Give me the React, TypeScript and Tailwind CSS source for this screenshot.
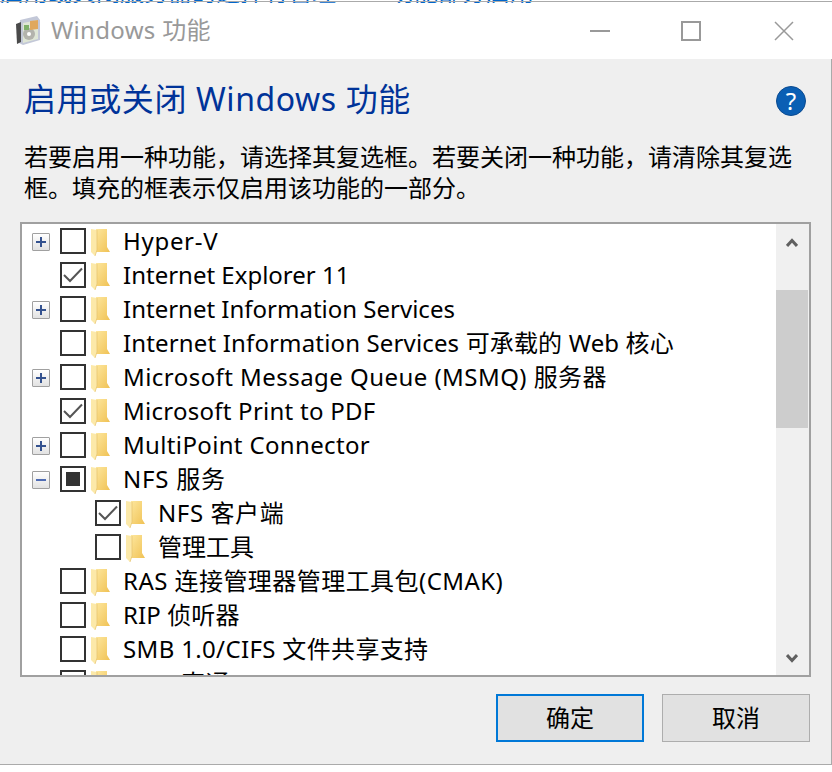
import React from 'react'

const font = 'font-["Noto_Sans","Noto_Sans_CJK_SC",sans-serif]'

type Row = {
  label: string
  toggle?: 'plus' | 'minus'
  state?: 'checked' | 'partial'
  child?: boolean
  track?: string
}

const rows: Row[] = [
  { label: 'Hyper-V', toggle: 'plus', track: 'tracking-[0.7px]' },
  { label: 'Internet Explorer 11', state: 'checked' },
  { label: 'Internet Information Services', toggle: 'plus' },
  { label: 'Internet Information Services 可承载的 Web 核心', track: 'tracking-[0.15px]' },
  { label: 'Microsoft Message Queue (MSMQ) 服务器', toggle: 'plus', track: 'tracking-[0.45px]' },
  { label: 'Microsoft Print to PDF', state: 'checked', track: 'tracking-[0.25px]' },
  { label: 'MultiPoint Connector', toggle: 'plus', track: 'tracking-[0.35px]' },
  { label: 'NFS 服务', toggle: 'minus', state: 'partial', track: 'tracking-[0.8px]' },
  { label: 'NFS 客户端', state: 'checked', child: true, track: 'tracking-[0.6px]' },
  { label: '管理工具', child: true },
  { label: 'RAS 连接管理器管理工具包(CMAK)', track: 'tracking-[0.45px]' },
  { label: 'RIP 侦听器', track: 'tracking-[0.1px]' },
  { label: 'SMB 1.0/CIFS 文件共享支持', track: 'tracking-[0.35px]' },
  { label: 'SMB 直通', track: 'tracking-[0.35px]' },
]

const Folder = () => (
  <svg width="19" height="27" viewBox="0 0 19 27" className="shrink-0 mt-[3px]">
    <defs>
      <linearGradient id="folderBack" x1="0" y1="0" x2="1" y2="1">
        <stop offset="0" stopColor="#fde69c" />
        <stop offset="1" stopColor="#f0c255" />
      </linearGradient>
    </defs>
    <path d="M5 0h11v18l3 5H5z" fill="url(#folderBack)" />
    <path d="M0 0l6 1v20l-2 6-3-3-1-1z" fill="#fce9a9" />
    <path d="M6 1v20l-2 6" stroke="#e5c26c" strokeWidth="0.700" fill="none" />
  </svg>
)

const Toggle = ({ kind }: { kind: 'plus' | 'minus' }) => (
  <div className="w-[18px] h-[18px] mt-[2px] border border-[#a0a0a0] rounded-[1px] bg-gradient-to-b from-white to-[#e2e2e2] flex items-center justify-center">
    <svg width="12" height="12" viewBox="0 0 12 12">
      <rect x="1" y="5" width="10" height="2" fill={kind === 'plus' ? '#34528f' : '#4f6cb3'} />
      {kind === 'plus' && <rect x="5" y="1" width="2" height="10" fill="#34528f" />}
    </svg>
  </div>
)

const Check = ({ state }: { state?: Row['state'] }) => (
  <div className="w-[26px] h-[26px] shrink-0 border-2 border-[#333333] bg-white flex items-center justify-center">
    {state === 'checked' && (
      <svg width="20" height="16" viewBox="0 0 20 16" fill="none">
        <path d="M1 8l6 6L19 1.500" stroke="#555555" strokeWidth="2" />
      </svg>
    )}
    {state === 'partial' && <div className="w-3.5 h-3.5 bg-[#333333]" />}
  </div>
)

const Chevron = ({ down }: { down?: boolean }) => (
  <svg width="12" height="9" viewBox="0 0 12 9" className={down ? 'rotate-180' : ''}>
    <path d="M1 8l5-5.500 5 5.500" stroke="#606060" strokeWidth="3" fill="none" />
  </svg>
)

const ListRow = ({ row }: { row: Row }) => (
  <div className={`h-[34px] flex items-center shrink-0 ${row.child ? 'pl-[73px]' : 'pl-[38px]'}`}>
    {!row.child && (
      <div className="w-[18px] -ml-[28px] mr-[10px] flex justify-center">
        {row.toggle && <Toggle kind={row.toggle} />}
      </div>
    )}
    <Check state={row.state} />
    <div className="ml-[5px] mr-[13px] flex">
      <Folder />
    </div>
    <span className={`text-[24px] text-black whitespace-nowrap ${row.track ?? ''}`}>{row.label}</span>
  </div>
)

export default function App() {
  return (
    <div className={`w-[832px] h-[772px] bg-white overflow-hidden flex flex-col ${font}`}>
      {/* window behind the dialog, only the bottom of its text shows */}
      <div className="relative h-[3px] overflow-hidden text-[24px] leading-[24px] text-[#0066cc] whitespace-nowrap">
        <div className="-mt-[20px] flex">
          <span className="w-[390px]">启用或关闭服务器的选择有管理</span>
          <span>功能部分启用</span>
        </div>
        <div className="absolute left-0 right-0 top-[1px] h-px bg-[#aaaaaa]" />
      </div>
      <div className="h-[56px] shrink-0 bg-white flex items-center pl-[14px]">
        <svg width="30" height="32" viewBox="0 0 30 32" className="shrink-0">
          <path d="M6 5l17-4 3 4v20L9 30l-4-2z" fill="#c3c8d8" />
          <path d="M2 9l5-2v20l-4 2z" fill="#4a4a4a" />
          <path d="M9 8l15-3v19L9 28z" fill="#dfe6d6" />
          <circle cx="15" cy="19" r="6" fill="#b3b3ac" />
          <circle cx="15" cy="19" r="2" fill="#ffffff" />
          <path d="M16 6l8-1v9l-8 1z" fill="#e0a85c" />
          <path d="M10 10h5v5h-5z" fill="#7fb06a" />
        </svg>
        <span className="ml-[7px] mb-[2px] text-[24px] tracking-[0.3px] text-[#999999]">Windows 功能</span>
        <div className="ml-auto flex items-center pr-[38px]">
          <div className="w-5 h-0.5 bg-[#999999]" />
          <div className="ml-[71px] w-5 h-5 border-2 border-[#999999]" />
          <svg width="20" height="20" viewBox="0 0 20 20" className="ml-[73px]">
            <path d="M1 1l18 18M19 1L1 19" stroke="#999999" strokeWidth="1.500" fill="none" />
          </svg>
        </div>
      </div>
      <div className="h-[706px] shrink-0 bg-[#efefef] border-r border-[#aaaaaa] border-b flex flex-col">
        <div className="flex items-center justify-between pl-[24px] pr-[25px] pt-[20px] h-[64px]">
          <h1 className="mb-[4px] text-[32px] leading-[44px] tracking-[0.6px] text-[#003399]">启用或关闭 Windows 功能</h1>
          <div className="w-[30px] h-[30px] rounded-full bg-[#0a5fb4] border border-[#0a4a90] flex items-center justify-center text-white text-[24px] leading-none">
            ?
          </div>
        </div>
        <p className="mt-[18px] pl-[24px] w-[800px] text-[24px] leading-[31px] text-black">
          若要启用一种功能，请选择其复选框。若要关闭一种功能，请清除其复选框。填充的框表示仅启用该功能的一部分。
        </p>
        <div className="mt-[19px] ml-[20px] w-[791px] h-[455px] border-2 border-[#a0a0a0] bg-white flex overflow-hidden">
          <div className="flex-1 min-w-0 flex flex-col">
            {rows.map((row) => (
              <ListRow key={row.label} row={row} />
            ))}
          </div>
          <div className="w-[33px] shrink-0 bg-[#f0f0f0] flex flex-col">
            <div className="w-[32px] h-[33px] pt-[14px] flex justify-center items-start">
              <Chevron />
            </div>
            <div className="w-[32px] h-[138px] mt-[33px] bg-[#cdcdcd]" />
            <div className="w-[32px] mt-auto h-[33px] pb-[12px] flex justify-center items-end">
              <Chevron down />
            </div>
          </div>
        </div>
        <div className="mt-[17px] pl-[496px] flex gap-[18px]">
          <button className="w-[148px] h-[48px] bg-[#e1e1e1] border-2 border-[#0078d7] text-[24px] text-black">确定</button>
          <button className="w-[148px] h-[48px] bg-[#e1e1e1] border border-[#adadad] text-[24px] text-black">取消</button>
        </div>
      </div>
    </div>
  )
}
